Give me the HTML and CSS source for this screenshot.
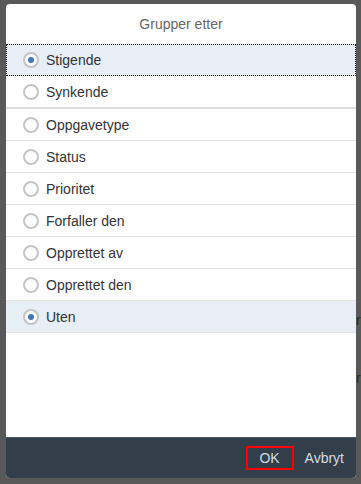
FILE: index.html
```html
<!DOCTYPE html>
<html lang="no">
<head>
    <meta charset="UTF-8">
    <meta name="viewport" content="width=device-width, initial-scale=1.0">
    <title>Grupper etter</title>
    <link rel="stylesheet" href="styles.css">
</head>
<body>
    <div class="backdrop-lines">
        <span class="bg-char one">r</span>
        <span class="bg-char two">r</span>
    </div>
    <div class="dialog">
        <div class="dialog-header">Grupper etter</div>
        <div class="dialog-content">
            <ul class="option-list order">
                <li class="option selected focused"><span class="radio"></span>Stigende</li>
                <li class="option"><span class="radio"></span>Synkende</li>
            </ul>
            <ul class="option-list fields">
                <li class="option"><span class="radio"></span>Oppgavetype</li>
                <li class="option"><span class="radio"></span>Status</li>
                <li class="option"><span class="radio"></span>Prioritet</li>
                <li class="option"><span class="radio"></span>Forfaller den</li>
                <li class="option"><span class="radio"></span>Opprettet av</li>
                <li class="option"><span class="radio"></span>Opprettet den</li>
                <li class="option selected"><span class="radio"></span>Uten</li>
            </ul>
        </div>
        <div class="dialog-footer">
            <button class="footer-btn ok">OK</button>
            <button class="footer-btn cancel">Avbryt</button>
        </div>
    </div>
</body>
</html>
```

FILE: styles.css
```css
html, body {
    margin: 0;
    height: 100%;
}
body {
    font-family: 'Liberation Sans', Arial, sans-serif;
    background-color: #595959;
    padding: 4px 5px 6px 6px;
    box-sizing: border-box;
    position: relative;
    overflow: hidden;
}
.backdrop-lines {
    position: absolute;
    inset: 0;
}
.bg-char {
    position: absolute;
    left: 356px;
    color: #2a2a2a;
    font-size: 14px;
}
.bg-char.one { top: 312px; }
.bg-char.two { top: 370px; }
.dialog {
    position: relative;
    height: 100%;
    display: flex;
    flex-direction: column;
    background: white;
    border-radius: 4px;
    overflow: hidden;
}
.dialog-header {
    height: 40px;
    line-height: 40px;
    text-align: center;
    color: #666;
    font-size: 14px;
}
.dialog-content {
    flex: 1;
}
.option-list {
    list-style: none;
    margin: 0;
    padding: 0;
}
.option-list.order {
    border-bottom: 2px solid #e0e0e0;
}
.option {
    display: flex;
    align-items: center;
    height: 31px;
    padding-left: 17px;
    color: #333;
    font-size: 14px;
    border-bottom: 1px solid #e5e5e5;
}
.option-list.order .option:last-child {
    border-bottom: none;
}
.option.selected {
    background: #e7eef6;
}
.option.focused {
    outline: 1px dotted #000;
    outline-offset: -1px;
}
.radio {
    width: 12px;
    height: 12px;
    border: 2px solid #c4c4c4;
    border-radius: 50%;
    margin-right: 7px;
    display: flex;
    align-items: center;
    justify-content: center;
    background: white;
}
.option.selected .radio::after {
    content: '';
    width: 6px;
    height: 6px;
    border-radius: 50%;
    background: #3d7ab8;
}
.dialog-footer {
    height: 40px;
    background: #323e4a;
    border-top: 1px solid #4a5a68;
    display: flex;
    justify-content: flex-end;
    align-items: center;
    padding-right: 12px;
    gap: 11px;
}
.footer-btn {
    background: none;
    border: 2px solid transparent;
    color: #d3dbe3;
    font-family: inherit;
    font-size: 14px;
    padding: 0;
    height: 24px;
}
.footer-btn.ok {
    border-color: #ff0000;
    width: 48px;
}
.footer-btn.cancel {
    border: none;
}
```
